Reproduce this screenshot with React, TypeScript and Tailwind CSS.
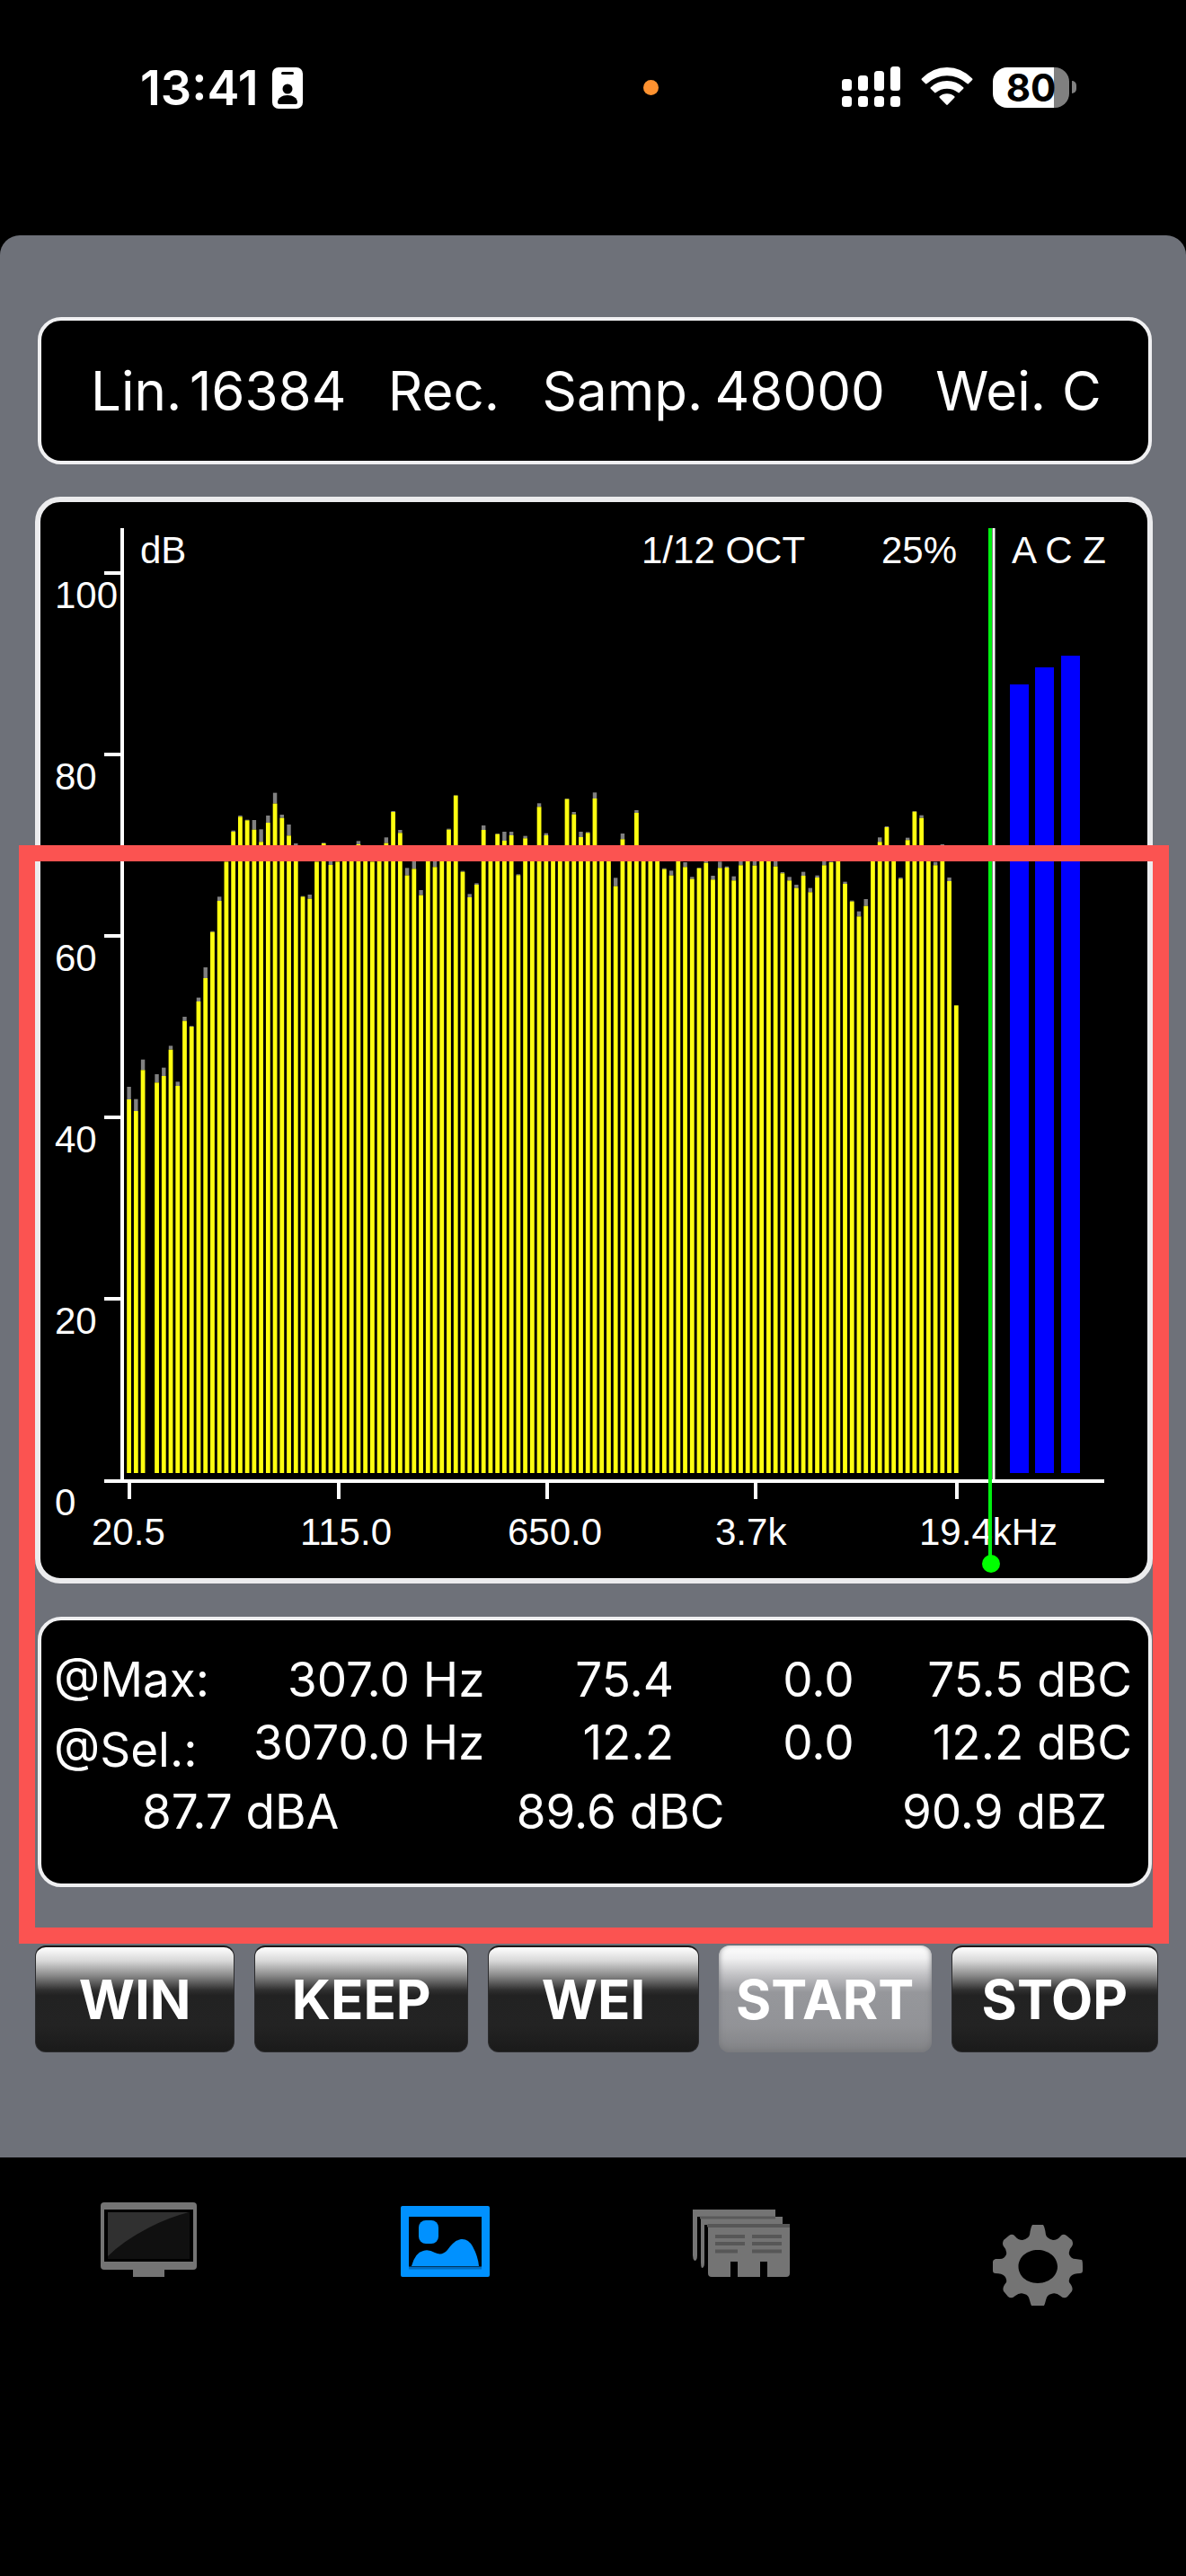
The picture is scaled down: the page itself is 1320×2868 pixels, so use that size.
import React from "react";

/* [held peak, current level] per 1/12 octave band, as distance below the top of the scale. */
const BANDS: ([number, number] | null)[] = [
  [1080, 1122], [1121, 1161], [989, 1024], null, [1038, 1066], [1016, 1044], [943, 956], [1063, 1077],
  [846, 860], [877, 879], [782, 795], [681, 717], [560, 563], [445, 459], [328, 328], [224, 228],
  [174, 178], [188, 190], [189, 221], [220, 262], [174, 198], [98, 134], [171, 182], [204, 241],
  [267, 290], [443, 445], [438, 452], [328, 328], [265, 267], [320, 339], [328, 328], [300, 300],
  [300, 300], [259, 270], [300, 300], [328, 328], [300, 300], [247, 266], [159, 162], [222, 232],
  [349, 374], [326, 352], [423, 440], [310, 310], [320, 346], [310, 310], [218, 221], [106, 107],
  [359, 362], [436, 447], [400, 405], [207, 222], [276, 280], [234, 236], [228, 258], [228, 240],
  [370, 373], [242, 250], [300, 300], [133, 145], [233, 240], [300, 300], [300, 300], [117, 119],
  [162, 170], [228, 246], [229, 232], [97, 117], [300, 300], [300, 300], [382, 410], [234, 253],
  [300, 300], [156, 165], [300, 300], [300, 300], [276, 280], [350, 353], [358, 374], [300, 300],
  [330, 346], [379, 386], [348, 350], [325, 332], [375, 388], [328, 349], [344, 348], [377, 391],
  [325, 340], [310, 310], [325, 341], [310, 310], [310, 310], [325, 344], [363, 367], [379, 391],
  [405, 416], [362, 375], [416, 430], [374, 381], [326, 340], [328, 330], [310, 310], [395, 402],
  [458, 461], [494, 511], [453, 476], [310, 310], [247, 262], [210, 213], [300, 300], [381, 385],
  [248, 256], [159, 161], [173, 182], [300, 300], [329, 340], [270, 300], [381, 393], [808, 808],
];

const FLOOR = 1081;
const AXIS = 1089;
const levelY = (v: number) => 291 + v / 3;
const bandX = (i: number) => 98.6 + i * 7.737;

const Y_TICKS = [100, 80, 60, 40, 20, 0];
const X_TICKS = [
  { at: 98, label: "20.5", x: 57 },
  { at: 331, label: "115.0", x: 289 },
  { at: 563, label: "650.0", x: 520 },
  { at: 795, label: "3.7k", x: 751 },
  { at: 1019, label: "19.4kHz", x: 978 },
];
const WEIGHTED = [
  { x: 1079, top: 203 },
  { x: 1107, top: 184 },
  { x: 1136, top: 171 },
];

function SpectrumChart() {
  return (
    <svg
      viewBox="0 0 1232 1198"
      className="block h-auto w-full font-['Liberation_Sans',sans-serif] text-[42px]"
      role="img"
      aria-label="Octave band spectrum"
    >
      {BANDS.map((band, i) =>
        band ? (
          <g key={i}>
            <rect x={bandX(i) - 2.2} y={levelY(band[0])} width={4.4} height={levelY(band[1]) - levelY(band[0])} fill="#808080" />
            <rect x={bandX(i) - 2.4} y={levelY(band[1])} width={4.8} height={FLOOR - levelY(band[1])} fill="#ffff10" />
          </g>
        ) : null
      )}
      {WEIGHTED.map((b) => (
        <rect key={b.x} x={b.x} y={b.top} width={21} height={FLOOR - b.top} fill="#0000ff" />
      ))}
      <g stroke="#fff" strokeWidth={4}>
        <path d={`M91 29V${AXIS}M71 ${AXIS + 1}H1184`} />
        <path d={`M1061 29V${AXIS}`} strokeWidth={3} />
        {Y_TICKS.slice(0, 5).map((t, i) => (
          <path key={t} d={`M71 ${79 + i * 202}H90`} />
        ))}
        {X_TICKS.map((t) => (
          <path key={t.label} d={`M${t.at + 1} ${AXIS}V1110`} />
        ))}
      </g>
      <g fill="#fff">
        {Y_TICKS.map((t, i) => (
          <text key={t} x={16} y={118 + i * 202}>{t}</text>
        ))}
        {X_TICKS.map((t) => (
          <text key={t.label} x={t.x} y={1161}>{t.label}</text>
        ))}
        <text x={111} y={68}>dB</text>
        <text x={669} y={68}>1/12 OCT</text>
        <text x={936} y={68}>25%</text>
        <text x={1081} y={68}>A C Z</text>
      </g>
      <path d="M1057 29V1180" stroke="#00f010" strokeWidth={4} />
      <circle cx={1058} cy={1182} r={10} fill="#00ff00" />
    </svg>
  );
}

function StatusBar() {
  return (
    <header className="grid h-[262px] shrink-0 grid-cols-[560fr_17fr_465fr] items-start pt-[68px] pr-[122px] pl-[156px] text-white">
      <div className="flex items-center gap-[15px]">
        <span className="text-[54px] leading-[60px] font-semibold">13:41</span>
        <svg width="34" height="46" viewBox="0 0 34 46" aria-hidden="true">
          <rect width="34" height="46" rx="7" fill="#fff" />
          <rect x="10" y="5" width="14" height="3" rx="1.5" fill="#000" />
          <circle cx="17" cy="24" r="5.5" fill="#000" />
          <path d="M6 39C6 34 11 31 17 31S28 34 28 39Q28 41 26 41H8Q6 41 6 39Z" fill="#000" />
        </svg>
      </div>
      <div className="mt-[21px] h-[17px] w-[17px] rounded-full bg-[#ff9230]" />
      <div className="mt-[6px] flex items-center justify-end">
        <svg width="65" height="46" viewBox="0 0 65 46" fill="#fff" aria-label="Signal" role="img">
          <rect x="0" y="14" width="11" height="13" rx="3.5" />
          <rect x="18" y="10" width="11" height="17" rx="3.5" />
          <rect x="36" y="5" width="11" height="22" rx="3.5" />
          <rect x="54" y="0" width="11" height="27" rx="3.5" />
          <rect x="0" y="33" width="11" height="12" rx="3.5" />
          <rect x="18" y="33" width="11" height="12" rx="3.5" />
          <rect x="36" y="33" width="11" height="12" rx="3.5" />
          <rect x="54" y="33" width="11" height="12" rx="3.5" />
        </svg>
        <svg width="58" height="46" viewBox="0 0 58 46" className="ml-[23px]" fill="#fff" aria-label="Wi-Fi" role="img">
          <path d="M0.8 13.5Q13 1 29 1T57.2 13.5Q57.8 14.2 57.2 14.9L52.8 19.2Q52 19.8 51.3 19.1Q41.5 10.3 29 10.3T6.7 19.1Q6 19.8 5.2 19.2L0.8 14.9Q0.2 14.2 0.8 13.5Z" />
          <path d="M10.8 23.2Q18.5 16 29 16T47.2 23.2Q47.9 24 47.2 24.7L42.6 29.2Q42 29.7 41.3 29.1Q36 24.7 29 24.7T16.7 29.1Q16 29.7 15.4 29.2L10.8 24.7Q10.1 24 10.8 23.2Z" />
          <path d="M20.7 33.2Q24 30.3 29 30.3T37.3 33.2Q38 34 37.3 34.7L29.8 42.5Q29 43.3 28.2 42.5L20.7 34.7Q20 34 20.7 33.2Z" />
        </svg>
        <div className="ml-[22px] flex h-[45px] w-[85px] items-center justify-center rounded-[16px] bg-[linear-gradient(to_right,#fff_68px,#808080_68px)] text-[42px] leading-[45px] font-bold text-black">
          80
        </div>
        <div className="ml-[3px] h-[14px] w-[5px] rounded-r-full bg-[#808080]" />
      </div>
    </header>
  );
}

const PANEL = "ml-[3px] mr-[7px] rounded-[26px] border-4 border-[#f0f0f2] bg-black text-white";

function SettingsPanel() {
  return (
    <section className={`${PANEL} grid h-[164px] grid-cols-[110fr_221fr_172fr_192fr_246fr_141fr_96fr] items-center pl-[55px] text-[60px] leading-[72px] whitespace-nowrap`}>
      <span>Lin.</span>
      <span>16384</span>
      <span>Rec.</span>
      <span>Samp.</span>
      <span>48000</span>
      <span>Wei.</span>
      <span>C</span>
    </section>
  );
}

function ReadoutPanel() {
  return (
    <section className={`${PANEL} mt-[37px] h-[301px] pt-[27px] pr-[18px] pl-[14px] text-[53px] whitespace-nowrap`}>
      <div className="flex h-[151px]">
        <div className="w-[180px] leading-[78px]">
          <div>@Max:</div>
          <div>@Sel.:</div>
        </div>
        <div className="grid flex-1 auto-rows-[70px] grid-cols-[300fr_211fr_201fr_310fr] pt-1 text-right leading-[70px]">
          <span>307.0 Hz</span>
          <span>75.4</span>
          <span>0.0</span>
          <span>75.5 dBC</span>
          <span>3070.0 Hz</span>
          <span>12.2</span>
          <span>0.0</span>
          <span>12.2 dBC</span>
        </div>
      </div>
      <div className="flex justify-between pr-[28px] pl-[98px] leading-[70px]">
        <span>87.7 dBA</span>
        <span>89.6 dBC</span>
        <span>90.9 dBZ</span>
      </div>
    </section>
  );
}

const BUTTON = "h-[119px] rounded-[12px] text-[60px] font-bold text-white";
const DARK =
  "border border-[#2a2a2c] border-t-2 border-t-[#1c1819] bg-[linear-gradient(to_bottom,#ffffff_0%,#d8d8d8_13%,#8a8a8a_27%,#303030_41%,#222222_46%,#232323_75%,#1a1a1a_100%)]";
const LIT =
  "bg-[linear-gradient(to_bottom,#ffffff_0%,#f0f0f1_12%,#c0c0c3_28%,#96979b_44%,#929397_75%,#828386_100%)] shadow-[inset_0_-2px_6px_#77787c]";

function ButtonRow() {
  return (
    <div className="mt-[65px] grid grid-cols-[222fr_238fr_234fr_237fr_230fr] gap-x-[22px]">
      <button type="button" className={`${BUTTON} ${DARK}`}>WIN</button>
      <button type="button" className={`${BUTTON} ${DARK}`}>KEEP</button>
      <button type="button" className={`${BUTTON} ${DARK}`}>WEI</button>
      <button type="button" className={`${BUTTON} ${LIT}`}>START</button>
      <button type="button" className={`${BUTTON} ${DARK}`}>STOP</button>
    </div>
  );
}

function MonitorIcon() {
  return (
    <svg width="107" height="83" viewBox="0 0 107 83" aria-hidden="true">
      <rect width="107" height="75" rx="4" fill="#747474" />
      <rect x="4" y="8" width="99" height="58" fill="#000" />
      <rect x="8" y="11" width="91" height="52" fill="#101010" />
      <path d="M8 11H98Q75 17 54 28Q25 43 8 60Z" fill="#303030" />
      <path d="M36 75H71V83H36Z" fill="#747474" />
    </svg>
  );
}

function PictureIcon() {
  return (
    <svg width="99" height="79" viewBox="0 0 99 79" aria-hidden="true">
      <path fillRule="evenodd" d="M2 0H97Q99 0 99 2V77Q99 79 97 79H2Q0 79 0 77V2Q0 0 2 0ZM9 12V68H90V12Z" fill="#0091ff" />
      <rect x="20" y="16" width="22" height="26" rx="8" fill="#0091ff" />
      <path d="M12 67Q16 52 25 50Q31 48 38 52Q46 56 52 49Q60 38 67 37Q75 36 80 45Q86 56 87 67Z" fill="#0091ff" />
      <path d="M9 69H90" stroke="#006bc0" strokeWidth="3" />
    </svg>
  );
}

function CardsIcon() {
  return (
    <svg width="108" height="76" viewBox="0 0 108 76" aria-hidden="true">
      <path d="M0 1H92V9H5V52Q5 58 2 58Q0 56 0 52Z" fill="#747474" />
      <path d="M9 9H100V18H13V60Q13 66 10 66Q9 64 9 60Z" fill="#747474" />
      <path d="M8 10H92M16 19H100" stroke="#5a5a5a" strokeWidth="3" />
      <path d="M17 17H108V72Q108 76 104 76H83V59H75V76H50V59H42V76H21Q17 76 17 72Z" fill="#747474" />
      <path d="M17 19H108M25 31H58M66 31H99M25 39H58M66 39H99M25 47.5H50M66 47.5H99" stroke="#575757" strokeWidth="4" />
    </svg>
  );
}

function GearIcon() {
  return (
    <svg width="100" height="90" viewBox="0 0 100 90" aria-hidden="true">
      <path
        fillRule="evenodd"
        d="M44 0H56Q58 3 59 11Q60 15 67 17Q72 17 75 13Q78 9 82 12L88 17Q90 21 88 24Q84 28 85 33Q87 38 92 38L99 39Q100 40 100 46V51Q100 54 97 54Q90 54 87 57Q84 60 85 64Q90 70 88 74L83 80Q79 83 75 79Q70 75 65 77Q60 78 59 84Q58 88 57 90H43Q42 88 41 84Q40 78 35 77Q30 75 25 79Q21 83 17 80L12 74Q10 70 15 64Q16 60 13 57Q10 54 3 54Q0 54 0 51V41Q0 39 3 38L8 38Q13 38 15 33Q16 28 12 24Q10 21 12 17L18 12Q22 9 25 13Q28 17 33 17Q40 15 41 11Q42 3 44 0ZM50 28C38 28 28.5 36 28.5 46.500S38 65 50 65S72 57 72 46.500S62 28 50 28Z"
        fill="#747474"
      />
    </svg>
  );
}

function TabBar() {
  return (
    <nav className="grid grid-cols-4 justify-items-center">
      <button type="button" aria-label="Monitor" className="h-fit pt-[50px]"><MonitorIcon /></button>
      <button type="button" aria-label="Spectrum" aria-current="page" className="h-fit pt-[54px]"><PictureIcon /></button>
      <button type="button" aria-label="Records" className="h-fit pt-[57px]"><CardsIcon /></button>
      <button type="button" aria-label="Settings" className="h-fit pt-[75px]"><GearIcon /></button>
    </nav>
  );
}

export default function App() {
  return (
    <div className="flex min-h-screen flex-col bg-black font-['Inter',sans-serif]">
      <StatusBar />
      <main className="relative rounded-t-[22px] bg-[#6e7179] pt-[91px] pr-[31px] pb-[117px] pl-[39px]">
        <SettingsPanel />
        <section className="mt-[36px] mr-[6px] rounded-[28px] border-[6px] border-[#ececee] bg-black">
          <SpectrumChart />
        </section>
        <ReadoutPanel />
        <ButtonRow />
        <div className="pointer-events-none absolute top-[679px] right-[19px] bottom-[238px] left-[21px] border-[18px] border-[#fb5351]" />
      </main>
      <TabBar />
    </div>
  );
}
